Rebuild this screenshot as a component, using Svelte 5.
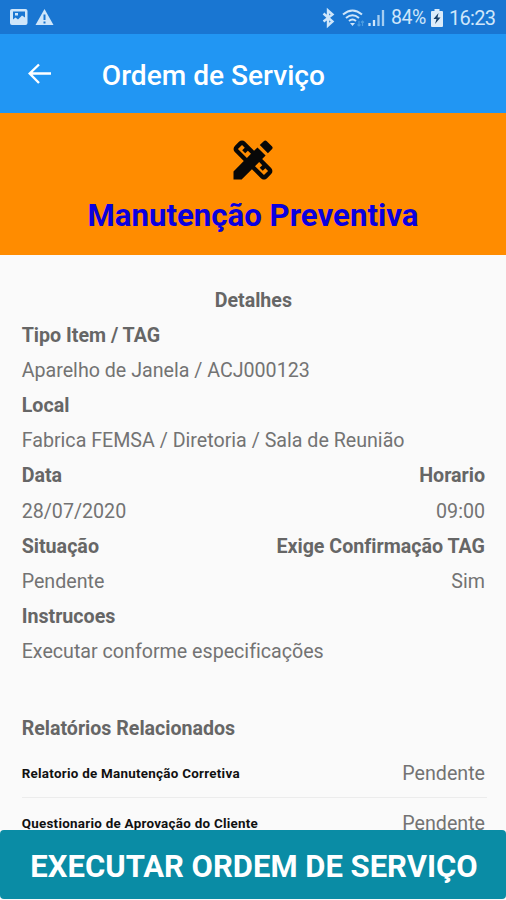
<script>
  const rows = [
    { left: 'Tipo Item / TAG', bold: true },
    { left: 'Aparelho de Janela / ACJ000123' },
    { left: 'Local', bold: true },
    { left: 'Fabrica FEMSA / Diretoria / Sala de Reunião' },
    { left: 'Data', right: 'Horario', bold: true },
    { left: '28/07/2020', right: '09:00' },
    { left: 'Situação', right: 'Exige Confirmação TAG', bold: true },
    { left: 'Pendente', right: 'Sim' },
    { left: 'Instrucoes', bold: true },
    { left: 'Executar conforme especificações' }
  ];
  const reports = [
    { name: 'Relatorio de Manutenção Corretiva', status: 'Pendente' },
    { name: 'Questionario de Aprovação do Cliente', status: 'Pendente' }
  ];
</script>

<div class="screen">
  <div class="status">
    <svg class="notices" width="46" height="20" viewBox="0 0 46 20" fill="#cfe6fa">
      <path fill-rule="evenodd" d="M2 1h13.500a2 2 0 0 1 2 2v12a2 2 0 0 1-2 2H2a2 2 0 0 1-2-2V3a2 2 0 0 1 2-2zM3 3.500v8l2.500-2 2.500 2 4-4 3 2v-6zM5 5h3v2.500H5z" />
      <path fill-rule="evenodd" d="M34.500 1l9 16h-18zM33.500 6.500v5.500h2V6.500zM33.500 13.500v2h2v-2z" />
    </svg>
    <div class="indicators">
      <svg width="66" height="22" viewBox="0 0 66 22" fill="none" stroke="#cfe6fa">
        <path d="M1.500 6.500l9 8-4.500 4V3.500l4.500 4-9 7" stroke-width="2.400" />
        <path d="M21 7.500q9.500-8 19 0M24 11q6.500-5.500 13 0M27 14q3.500-3 7 0" stroke-width="2" />
        <path d="M28 16h5l-2.500 3z" fill="#cfe6fa" stroke="none" />
        <path d="M37 14v5m-1.500-1.500L37 19l1.500-1.500M40.500 19v-5m-1.500 1.500l1.500-1.500 1.500 1.500" stroke="#4a9be0" stroke-width="1.200" />
        <path d="M47.500 19v-3M52 19v-6" stroke-width="2.300" />
        <path d="M56.500 19V8M61 19V3" stroke="#a5cdf1" stroke-width="2.300" />
      </svg>
      <span class="percent">84%</span>
      <svg class="battery" width="12" height="18" viewBox="0 0 12 18">
        <path d="M3.500 0h5v2H11q1 0 1 1v14q0 1-1 1H1q-1 0-1-1V3q0-1 1-1h2.500z" fill="#dcecfa" />
        <path d="M7.500 4L2.500 10h3L4 15l5.500-6.500h-3z" fill="#173f68" />
      </svg>
      <span class="clock">16:23</span>
    </div>
  </div>

  <header>
    <svg width="24" height="22" viewBox="0 0 24 22" fill="none" stroke="#fff" stroke-width="2.400">
      <path d="M11 1.500L1.700 10.500l9.300 9.500M2 10.500h21" />
    </svg>
    <h1>Ordem de Serviço</h1>
  </header>

  <section class="banner">
    <svg width="52" height="52" viewBox="0 0 24 24" fill="#080808">
      <path d="M16.240 11.510l1.570-1.570-3.750-3.750-1.570 1.570-4.140-4.130c-.78-.78-2.050-.78-2.830 0l-1.900 1.900c-.78.78-.78 2.050 0 2.830l4.130 4.130L3 17.250V21h3.750l4.760-4.760 4.130 4.130c.95.95 2.230.6 2.830 0l1.900-1.900c.78-.78.78-2.050 0-2.830l-4.130-4.130zm-7.060-.44L5.040 6.940l1.890-1.900L8.200 6.310 7.020 7.500l1.410 1.410 1.190-1.190 1.450 1.450-1.890 1.900zm7.880 7.890l-4.130-4.130 1.900-1.900 1.450 1.450-1.190 1.190 1.410 1.410 1.190-1.190 1.270 1.270-1.900 1.900zM20.710 7.040a1 1 0 0 0 0-1.410l-2.340-2.340c-.47-.47-1.120-.29-1.410 0l-1.830 1.830 3.750 3.750 1.830-1.830z" />
    </svg>
    <h2>Manutenção Preventiva</h2>
  </section>

  <main>
    <h3 class="center">Detalhes</h3>
    {#each rows as row}
      <div class="row" class:bold={row.bold}>
        <span>{row.left}</span>
        {#if row.right}<span>{row.right}</span>{/if}
      </div>
    {/each}
    <h3 class="related">Relatórios Relacionados</h3>
    {#each reports as report}
      <div class="report">
        <span class="name">{report.name}</span>
        <span class="state">{report.status}</span>
      </div>
    {/each}
  </main>

  <button>EXECUTAR ORDEM DE SERVIÇO</button>
</div>

<style>
  .screen {
    width: 506px;
    height: 900px;
    overflow: hidden;
    display: flex;
    flex-direction: column;
    background: #fafafa;
    color: #737373;
    font-family: Roboto, sans-serif;
    font-size: 19.65px;
    font-variant-ligatures: none;
  }
  h1, h2, h3 { margin: 0; }
  .status {
    flex: none;
    height: 34px;
    box-sizing: border-box;
    padding: 1px 11px 0 10px;
    display: flex;
    align-items: center;
    justify-content: space-between;
    background: #1976d2;
    color: #cfe6fa;
  }
  .indicators { display: flex; align-items: center; }
  .percent { margin-left: 3px; width: 35px; font-size: 19.5px; letter-spacing: -0.4px; white-space: nowrap; }
  .battery { margin-left: 5px; }
  .clock { margin-left: 6px; width: 46px; font-size: 20px; letter-spacing: -0.7px; white-space: nowrap; }
  header {
    flex: none;
    height: 79px;
    box-sizing: border-box;
    padding: 0 28px;
    display: flex;
    align-items: center;
    background: #2196f3;
    color: #fff;
  }
  h1 { margin: 3px 0 0 49.8px; font-size: 28.1px; line-height: 33px; font-weight: 500; }
  .banner {
    flex: none;
    height: 142px;
    box-sizing: border-box;
    padding-top: 21px;
    display: flex;
    flex-direction: column;
    align-items: center;
    background: #ff8c00;
  }
  h2 { margin-top: 10px; font-size: 31.2px; line-height: 40px; color: #0b00df; white-space: nowrap; }
  main {
    flex: none;
    height: 575px;
    overflow: hidden;
    box-sizing: border-box;
    padding: 27.7px 21px 0 21.7px;
  }
  h3 { font-size: 19.6px; line-height: 35.15px; }
  .center { text-align: center; }
  .row {
    display: flex;
    justify-content: space-between;
    height: 35.15px;
    line-height: 35.15px;
    white-space: nowrap;
  }
  .bold { font-weight: 700; }
  .bold, h3 { color: #666; }
  .related { margin-top: 41.6px; }
  .report {
    display: flex;
    align-items: center;
    justify-content: space-between;
    height: 50px;
    box-sizing: border-box;
    padding-top: 3px;
    margin-right: -2px;
    border-bottom: 1px solid #ececec;
  }
  .related + .report { height: 51.5px; padding-top: 3.5px; }
  .state { margin-right: 2px; }
  .name { color: #111; font-size: 13.4px; font-weight: 700; letter-spacing: 0.27px; }
  button {
    flex: none;
    height: 69px;
    border: 0;
    border-radius: 4px;
    padding: 4px 0 0 2px;
    background: #0a8ca5;
    color: #fff;
    font: 700 31px Roboto, sans-serif;
    white-space: nowrap;
  }
</style>
